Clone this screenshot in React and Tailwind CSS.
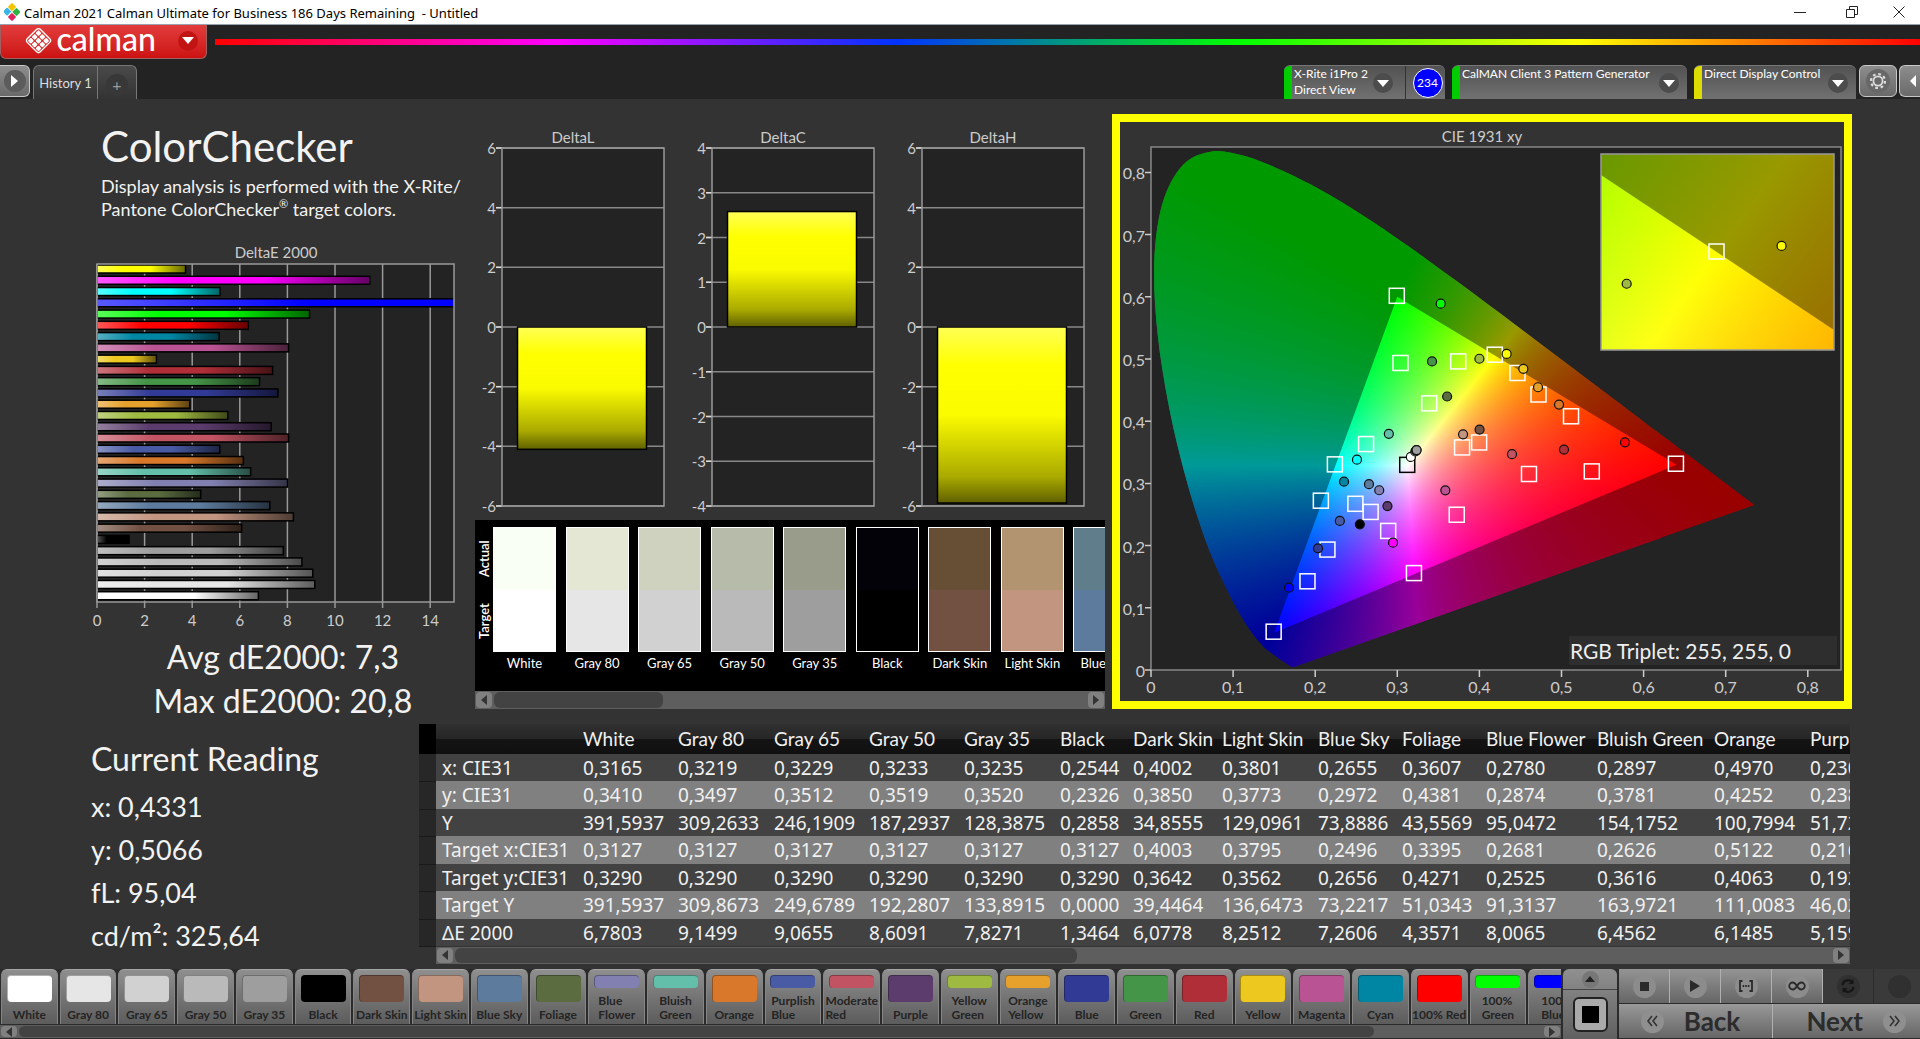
import React, { useLayoutEffect, useRef } from "react";

const PATCHES = [
  { name: "White", color: "#ffffff", dE: 6.7803 },
  { name: "Gray 80", color: "#e6e6e6", dE: 9.1499 },
  { name: "Gray 65", color: "#d1d1d1", dE: 9.0655 },
  { name: "Gray 50", color: "#bababa", dE: 8.6091 },
  { name: "Gray 35", color: "#9e9e9e", dE: 7.8271 },
  { name: "Black", color: "#000000", dE: 1.3464 },
  { name: "Dark Skin", color: "#735142", dE: 6.0778 },
  { name: "Light Skin", color: "#c29580", dE: 8.2512 },
  { name: "Blue Sky", color: "#5d7b9d", dE: 7.2606 },
  { name: "Foliage", color: "#5a6c40", dE: 4.3571 },
  { name: "Blue Flower", color: "#8280b0", dE: 8.0065, split: true },
  { name: "Bluish Green", color: "#63bfaa", dE: 6.4562, split: true },
  { name: "Orange", color: "#d9782a", dE: 6.1485 },
  { name: "Purplish Blue", color: "#4a5ba5", dE: 5.1596, split: true },
  { name: "Moderate Red", color: "#c25362", dE: 8.05, split: true },
  { name: "Purple", color: "#5c3c6c", dE: 7.32 },
  { name: "Yellow Green", color: "#9fba40", dE: 5.5, split: true },
  { name: "Orange Yellow", color: "#e6a12c", dE: 3.9, split: true },
  { name: "Blue", color: "#313a95", dE: 7.6 },
  { name: "Green", color: "#459548", dE: 6.83 },
  { name: "Red", color: "#b02e38", dE: 7.38 },
  { name: "Yellow", color: "#edc81f", dE: 2.5 },
  { name: "Magenta", color: "#ba5393", dE: 8.05 },
  { name: "Cyan", color: "#0086a3", dE: 5.13 },
  { name: "100% Red", color: "#ff0000", dE: 6.36 },
  { name: "100% Green", color: "#00ff00", dE: 8.93, split: true },
  { name: "100% Blue", color: "#0000ff", dE: 20.8, split: true },
  { name: "100% Cyan", color: "#00ffff", dE: 5.17 },
  { name: "100% Magenta", color: "#ff00ff", dE: 11.46 },
  { name: "100% Yellow", color: "#ffff00", dE: 3.72 },
];

const SWATCHES = [
  { name: "White", actual: "bg-[#f9fff5]", target: "bg-white" },
  { name: "Gray 80", actual: "bg-[#e3e7d4]", target: "bg-[#e6e6e6]" },
  { name: "Gray 65", actual: "bg-[#cfd2bf]", target: "bg-[#d1d1d1]" },
  { name: "Gray 50", actual: "bg-[#b6bbaa]", target: "bg-[#bababa]" },
  { name: "Gray 35", actual: "bg-[#999b8b]", target: "bg-[#9e9e9e]" },
  { name: "Black", actual: "bg-[#020208]", target: "bg-black" },
  { name: "Dark Skin", actual: "bg-[#674f36]", target: "bg-[#735142]" },
  { name: "Light Skin", actual: "bg-[#b39471]", target: "bg-[#c29580]" },
  { name: "Blue Sky", actual: "bg-[#607d8c]", target: "bg-[#5d7b9d]" },
];

const TARGETS = [
  [0.4003, 0.3642], [0.3795, 0.3562], [0.2496, 0.2656], [0.3395, 0.4271],
  [0.2681, 0.2525], [0.2626, 0.3616], [0.5122, 0.4063], [0.2155, 0.192],
  [0.461, 0.3135], [0.2895, 0.222], [0.3748, 0.4945], [0.4726, 0.4413],
  [0.1912, 0.141], [0.3045, 0.492], [0.5375, 0.3177], [0.447, 0.4759],
  [0.373, 0.248], [0.2075, 0.2706], [0.64, 0.33], [0.3, 0.6],
  [0.15, 0.06], [0.2246, 0.329], [0.3209, 0.1542], [0.4193, 0.5053],
];

const MEASURED = [
  [0.3165, 0.341, "#ffffff"], [0.3219, 0.3497, "#e6e6e6"], [0.3229, 0.3512, "#d1d1d1"],
  [0.3233, 0.3519, "#bababa"], [0.3235, 0.352, "#9e9e9e"], [0.2544, 0.2326, "#000000"],
  [0.4002, 0.385, "#735142"], [0.3801, 0.3773, "#c29580"], [0.2655, 0.2972, "#5d7b9d"],
  [0.3607, 0.4381, "#5a6c40"], [0.278, 0.2874, "#8280b0"], [0.2897, 0.3781, "#63bfaa"],
  [0.497, 0.4252, "#d9782a"], [0.23, 0.238, "#4a5ba5"], [0.4397, 0.3453, "#c25362"],
  [0.288, 0.262, "#5c3c6c"], [0.4, 0.4988, "#9fba40"], [0.4714, 0.453, "#e6a12c"],
  [0.2034, 0.194, "#313a95"], [0.3423, 0.4945, "#459548"], [0.503, 0.3527, "#b02e38"],
  [0.4535, 0.4826, "#edc81f"], [0.3585, 0.2873, "#ba5393"], [0.2351, 0.3011, "#0086a3"],
  [0.5773, 0.3645, "#ff0000"], [0.3529, 0.5873, "#00ff00"], [0.1681, 0.1307, "#0000ff"],
  [0.2509, 0.3365, "#00ffff"], [0.2948, 0.2031, "#ff00ff"], [0.4331, 0.5066, "#ffff00"],
];

const LOCUS = [
  [0.1741, 0.005], [0.1714, 0.0051], [0.1689, 0.0069], [0.1644, 0.0109], [0.1566, 0.0177],
  [0.144, 0.0297], [0.1355, 0.0399], [0.1241, 0.0578], [0.1096, 0.0868], [0.0913, 0.1327],
  [0.0687, 0.2007], [0.0454, 0.295], [0.0235, 0.4127], [0.0082, 0.5384], [0.0039, 0.6548],
  [0.0139, 0.7502], [0.0389, 0.812], [0.0743, 0.8338], [0.1142, 0.8262], [0.1547, 0.8059],
  [0.1929, 0.7816], [0.2296, 0.7543], [0.2658, 0.7243], [0.3016, 0.6923], [0.3373, 0.6589],
  [0.3731, 0.6245], [0.4087, 0.5896], [0.4441, 0.5547], [0.4788, 0.5202], [0.5125, 0.4866],
  [0.5448, 0.4544], [0.5752, 0.4242], [0.6029, 0.3965], [0.627, 0.3725], [0.6658, 0.334],
  [0.6915, 0.3083], [0.7079, 0.292], [0.726, 0.274], [0.7347, 0.2653],
];

const TABLE_COLS = [
  { name: "White", width: "w-[95px]", values: ["0,3165", "0,3410", "391,5937", "0,3127", "0,3290", "391,5937", "6,7803"] },
  { name: "Gray 80", width: "w-[96px]", values: ["0,3219", "0,3497", "309,2633", "0,3127", "0,3290", "309,8673", "9,1499"] },
  { name: "Gray 65", width: "w-[95px]", values: ["0,3229", "0,3512", "246,1909", "0,3127", "0,3290", "249,6789", "9,0655"] },
  { name: "Gray 50", width: "w-[95px]", values: ["0,3233", "0,3519", "187,2937", "0,3127", "0,3290", "192,2807", "8,6091"] },
  { name: "Gray 35", width: "w-[96px]", values: ["0,3235", "0,3520", "128,3875", "0,3127", "0,3290", "133,8915", "7,8271"] },
  { name: "Black", width: "w-[73px]", values: ["0,2544", "0,2326", "0,2858", "0,3127", "0,3290", "0,0000", "1,3464"] },
  { name: "Dark Skin", width: "w-[89px]", values: ["0,4002", "0,3850", "34,8555", "0,4003", "0,3642", "39,4464", "6,0778"] },
  { name: "Light Skin", width: "w-[96px]", values: ["0,3801", "0,3773", "129,0961", "0,3795", "0,3562", "136,6473", "8,2512"] },
  { name: "Blue Sky", width: "w-[84px]", values: ["0,2655", "0,2972", "73,8886", "0,2496", "0,2656", "73,2217", "7,2606"] },
  { name: "Foliage", width: "w-[84px]", values: ["0,3607", "0,4381", "43,5569", "0,3395", "0,4271", "51,0343", "4,3571"] },
  { name: "Blue Flower", width: "w-[111px]", values: ["0,2780", "0,2874", "95,0472", "0,2681", "0,2525", "91,3137", "8,0065"] },
  { name: "Bluish Green", width: "w-[117px]", values: ["0,2897", "0,3781", "154,1752", "0,2626", "0,3616", "163,9721", "6,4562"] },
  { name: "Orange", width: "w-[96px]", values: ["0,4970", "0,4252", "100,7994", "0,5122", "0,4063", "111,0083", "6,1485"] },
  { name: "Purplish Blue", width: "w-[130px]", values: ["0,2300", "0,2380", "51,7233", "0,2160", "0,1920", "46,0233", "5,1596"] },
];

const ROW_LABELS = ["x: CIE31", "y: CIE31", "Y", "Target x:CIE31", "Target y:CIE31", "Target Y", "ΔE 2000"];

/* ---------- title bar and header ---------- */

function TitleBar() {
  return (
    <div className="flex h-[25px] items-center justify-between border-b border-gray-400 bg-white pl-1 text-black">
      <div className="flex items-center gap-1">
        <svg width="16" height="18" viewBox="0 0 16 18">
          <rect x="5" y="1" width="6" height="6" rx="1" fill="#f5c400" transform="rotate(45 8 4)" />
          <rect x="0" y="6" width="6" height="6" rx="1" fill="#39b5e6" transform="rotate(45 3.5 9)" />
          <rect x="9.5" y="6" width="6" height="6" rx="1" fill="#2fb344" transform="rotate(45 12.5 9)" />
          <rect x="5" y="11" width="6" height="6" rx="1" fill="#e0245e" transform="rotate(45 8 14)" />
        </svg>
        <span className="whitespace-pre pt-0.5 font-['Noto_Sans',sans-serif] text-[13px] leading-5">
          Calman 2021 Calman Ultimate for Business 186 Days Remaining  - Untitled
        </span>
      </div>
      <div className="flex h-full">
        <button aria-label="Minimize" className="flex w-[52px] items-center justify-center">
          <svg width="12" height="12" viewBox="0 0 12 12" stroke="#222"><path d="M0 6.5h12" /></svg>
        </button>
        <button aria-label="Restore" className="flex w-[52px] items-center justify-center">
          <svg width="12" height="12" viewBox="0 0 12 12" fill="none" stroke="#222">
            <path d="M.5 3.5h8v8h-8zM3.5 3.5v-3h8v8h-3" />
          </svg>
        </button>
        <button aria-label="Close" className="flex w-[42px] items-center justify-center">
          <svg width="12" height="12" viewBox="0 0 12 12" stroke="#222"><path d="M.5.5l11 11M11.5.5l-11 11" /></svg>
        </button>
      </div>
    </div>
  );
}

function CalmanMark() {
  const cells = [];
  for (let i = 0; i < 3; i++) {
    for (let j = 0; j < 3; j++) {
      cells.push(<rect key={`${i}${j}`} x={i * 5.4 + 1.7} y={j * 5.4 + 1.7} width="4.4" height="4.4" rx="1" />);
    }
  }
  return (
    <svg width="27" height="27" viewBox="0 0 27 27">
      <g transform="translate(13.5 0.6) rotate(45)" fill="#fff">
        <rect x="0" y="0" width="18.4" height="18.4" rx="2.5" fill="none" stroke="#fff" strokeWidth="1.4" />
        {cells}
      </g>
    </svg>
  );
}

function ChevronDot({ className = "bg-[#4c4c4c]" }) {
  return (
    <span className={`flex size-5 shrink-0 items-center justify-center rounded-full ${className}`}>
      <svg width="12" height="7" viewBox="0 0 12 7" fill="#fff"><path d="M0 0h12L6 7z" /></svg>
    </span>
  );
}

function DeviceTab({ lines, bar, className, children }) {
  return (
    <div className={`flex overflow-hidden rounded-t-md border-t border-[#777] bg-gradient-to-b from-[#525252] to-[#717171] ${className}`}>
      <span className={`w-2 shrink-0 ${bar}`} />
      <button className="flex min-w-0 flex-1 justify-between pr-2 pl-0.5 text-left">
        <span className="whitespace-nowrap text-xs leading-4 text-white">
          {lines.map((l) => (
            <span key={l} className="block">{l}</span>
          ))}
        </span>
        <span className="mt-[7px]"><ChevronDot /></span>
      </button>
      {children}
    </div>
  );
}

function Header() {
  return (
    <header className="bg-[#232323]">
      <div className="flex h-10 items-start">
        <button className="flex h-[34px] w-[207px] items-center justify-between rounded-b-md border border-t-0 border-[#a06060] bg-gradient-to-b from-[#e23b3b] to-[#cc1111] pr-2 pb-0.5 pl-6">
          <CalmanMark />
          <span className="mb-1 w-[105px] text-left text-[32px] leading-7 font-medium text-white">calman</span>
          <ChevronDot className="ml-3 bg-[#c31414]" />
        </button>
        <div className="mt-3.5 ml-2 h-1.5 flex-1 bg-[linear-gradient(to_right,#f00_0%,#f0f_20%,#03f_40%,#0f0_60%,#ff0_80%,#f00_100%)]" />
      </div>

      <div className="flex h-[34px] items-start">
        <button
          aria-label="Expand panel"
          className="mr-[3px] flex h-8 w-[30px] items-center justify-center rounded-r-md border border-l-0 border-[#c8c8c8] bg-gradient-to-b from-[#8d8d8d] to-[#6a6a6a]"
        >
          <span className="flex size-[22px] items-center justify-center rounded-full bg-[#5c5c5c]">
            <svg width="7" height="12" viewBox="0 0 7 12" fill="#fff"><path d="M0 0l7 6-7 6z" /></svg>
          </span>
        </button>
        <div className="flex h-full w-[104px] rounded-t-md border border-b-0 border-[#777] bg-gradient-to-b from-[#4a4a4a] to-[#333]">
          <button className="flex-1 border-r border-[#777] pt-0.5 text-[13px] text-[#ddd]">History 1</button>
          <button aria-label="Add tab" className="flex w-[38px] items-center justify-center pt-1">
            <span className="flex size-[22px] items-center justify-center rounded-full bg-[#383838] text-base text-[#999]">+</span>
          </button>
        </div>

        <div className="ml-auto flex h-full">
          <DeviceTab lines={["X-Rite i1Pro 2", "Direct View"]} bar="bg-[#0c0]" className="mr-[7px] w-[161px]">
            <button className="ml-1 flex w-10 items-center justify-center border-l border-[#333] pl-1">
              <span className="flex size-[30px] shrink-0 items-center justify-center rounded-full border border-white bg-[#00f] text-xs text-white">
                234
              </span>
            </button>
          </DeviceTab>
          <DeviceTab lines={["CalMAN Client 3 Pattern Generator"]} bar="bg-[#0c0]" className="mr-[7px] w-[235px]" />
          <DeviceTab lines={["Direct Display Control"]} bar="bg-[#dcdc00]" className="mr-[3px] w-[162px]" />
          <button
            aria-label="Settings"
            className="mr-0.5 flex h-8 w-[38px] items-center justify-center rounded-md border border-[#c8c8c8] bg-gradient-to-b from-[#8d8d8d] to-[#6a6a6a]"
          >
            <span className="flex size-[24px] items-center justify-center rounded-full bg-[#686868]">
              <svg width="18" height="18" viewBox="0 0 18 18" fill="none" stroke="#ddd">
                <circle cx="9" cy="9" r="4.6" strokeWidth="1.8" />
                <circle cx="9" cy="9" r="7" strokeWidth="2.2" strokeDasharray="2.75 2.75" />
              </svg>
            </span>
          </button>
          <button
            aria-label="Collapse panel"
            className="flex h-8 w-[21px] items-center justify-end rounded-l-md border border-r-0 border-[#c8c8c8] bg-gradient-to-b from-[#8d8d8d] to-[#6a6a6a] pr-1"
          >
            <svg width="6" height="12" viewBox="0 0 6 12" fill="#fff"><path d="M6 0L0 6l6 6z" /></svg>
          </button>
        </div>
      </div>
    </header>
  );
}

/* ---------- charts ---------- */

function DeltaEChart() {
  const left = 97;
  const top = 43;
  const width = 357;
  const height = 338;
  const unit = width / 15;
  const step = height / PATCHES.length;
  const rows = [...PATCHES].reverse();
  return (
    <svg viewBox="0 0 475 414" className="block w-full" fill="#ccc" fontSize="15" textAnchor="middle">
      <defs>
        <linearGradient id="barShade">
          <stop offset="0" stopColor="#fff" stopOpacity="0.35" />
          <stop offset="0.3" stopColor="#fff" stopOpacity="0" />
          <stop offset="0.6" stopColor="#000" stopOpacity="0" />
          <stop offset="1" stopColor="#000" stopOpacity="0.6" />
        </linearGradient>
        <clipPath id="deClip"><rect x={left} y={top} width={width} height={height} /></clipPath>
      </defs>
      <text x="276" y="37">DeltaE 2000</text>
      <rect x={left} y={top} width={width} height={height} fill="#232323" />
      {[0, 2, 4, 6, 8, 10, 12, 14].map((v) => (
        <g key={v}>
          <path d={`M${left + v * unit} ${top}v${height + 6}`} stroke="#999" strokeWidth="1.5" />
          <text x={left + v * unit} y="405">{v}</text>
        </g>
      ))}
      <g clipPath="url(#deClip)">
        {rows.map((p, i) => (
          <g key={p.name}>
            <rect x={left} y={top + i * step + 1} width={p.dE * unit} height="8" fill={p.color} />
            <rect
              x={left}
              y={top + i * step + 1}
              width={p.dE > 15 ? 2 * width : p.dE * unit}
              height="8"
              fill="url(#barShade)"
              stroke="#000"
              strokeWidth="1.5"
            />
          </g>
        ))}
      </g>
      <rect x={left} y={top} width={width} height={height} fill="none" stroke="#999" strokeWidth="1.5" />
    </svg>
  );
}

function DeltaChart({ title, max, step, value }) {
  const top = 24;
  const height = 358;
  const y = (v) => top + ((max - v) / (2 * max)) * height;
  const ticks = [];
  for (let v = max; v >= -max; v -= step) ticks.push(v);
  return (
    <svg viewBox="0 0 210 392" className="block min-w-0 flex-1" fill="#ccc" fontSize="15">
      <defs>
        <linearGradient id={title} x2="0" y2="1">
          <stop offset="0" stopColor="#ffff55" />
          <stop offset="0.22" stopColor="#ffff00" />
          <stop offset="0.5" stopColor="#fbfb00" />
          <stop offset="0.85" stopColor="#aaaa00" />
          <stop offset="1" stopColor="#606000" />
        </linearGradient>
      </defs>
      <text x="98" y="19" textAnchor="middle">{title}</text>
      <rect x="27" y={top} width="162" height={height} fill="#232323" />
      {ticks.map((v) => (
        <g key={v}>
          <path d={`M21 ${y(v)}H189`} stroke="#888" strokeWidth="1.5" />
          <path d={`M21 ${y(v)}h6`} stroke="#ddd" strokeWidth="1.5" />
          <text x="21" y={y(v) + 6} textAnchor="end">{v}</text>
        </g>
      ))}
      <rect x="27" y={top} width="162" height={height} fill="none" stroke="#999" strokeWidth="1.5" />
      <rect
        x="42.5"
        y={Math.min(y(0), y(value))}
        width="129"
        height={Math.abs(y(0) - y(value))}
        fill={`url(#${title})`}
        stroke="#000"
        strokeWidth="1.5"
      />
    </svg>
  );
}

// Paints every pixel of the range with its normalised Rec.709 colour
function Chromaticity({ x0, x1, y0, y1, width, height }) {
  const ref = useRef(null);

  useLayoutEffect(() => {
    const ctx = ref.current.getContext("2d");
    const img = ctx.createImageData(width, height);
    for (let j = 0; j < height; j++) {
      for (let i = 0; i < width; i++) {
        const x = x0 + ((i + 0.5) / width) * (x1 - x0);
        const y = Math.max(y1 - ((j + 0.5) / height) * (y1 - y0), 0.001);
        const z = 1 - x - y;
        const r = Math.max(3.2406 * x - 1.5372 * y - 0.4986 * z, 0);
        const g = Math.max(-0.9689 * x + 1.8758 * y + 0.0415 * z, 0);
        const b = Math.max(0.0557 * x - 0.204 * y + 1.057 * z, 0);
        const m = Math.max(r, g, b);
        const k = (j * width + i) * 4;
        img.data[k] = (r / m) * 255;
        img.data[k + 1] = (g / m) * 255;
        img.data[k + 2] = (b / m) * 255;
        img.data[k + 3] = 255;
      }
    }
    ctx.putImageData(img, 0, 0);
  }, [x0, x1, y0, y1, width, height]);

  return <canvas ref={ref} width={width} height={height} className="block" />;
}

function CieChart() {
  const px = (x) => 31 + x * 821;
  const py = (y) => 548 - y * 622;
  const zx = (x) => 597 + (x - 0.4193) * 4680;
  const zy = (y) => 130 - (y - 0.5053) * 3920;
  const pts = LOCUS.map(([x, y]) => [px(x), py(y)]);
  let locus = `M${pts[0]}`;
  for (let i = 0; i < pts.length - 1; i++) {
    const a = pts[Math.max(i - 1, 0)];
    const b = pts[i];
    const c = pts[i + 1];
    const d = pts[Math.min(i + 2, pts.length - 1)];
    locus += `C${b[0] + (c[0] - a[0]) / 6} ${b[1] + (c[1] - a[1]) / 6} ${c[0] - (d[0] - b[0]) / 6} ${c[1] - (d[1] - b[1]) / 6} ${c}`;
  }
  locus += "Z";
  const gamut = `M${px(0.64)} ${py(0.33)}L${px(0.3)} ${py(0.6)}L${px(0.15)} ${py(0.06)}Z`;

  return (
    <svg viewBox="0 0 724 579" className="block w-full" fill="#ccc" fontSize="16">
      <defs>
        <clipPath id="locus"><path d={locus} /></clipPath>
        <clipPath id="zoomClip"><rect x="481" y="32" width="233" height="196" /></clipPath>
      </defs>
      <text x="362" y="20" textAnchor="middle" fontSize="15">CIE 1931 xy</text>
      <rect x="31" y="25" width="690" height="523" fill="#232323" stroke="#888" strokeWidth="1.5" />
      {[0, 1, 2, 3, 4, 5, 6, 7, 8].map((n) => (
        <g key={n} stroke="none">
          <path d={`M${px(n / 10)} 548v7M25 ${py(n / 10)}h6`} stroke="#ccc" strokeWidth="1.5" />
          <text x={px(n / 10)} y="571" textAnchor="middle">{n ? `0,${n}` : "0"}</text>
          <text x="25" y={py(n / 10) + 7} textAnchor="end">{n ? `0,${n}` : "0"}</text>
        </g>
      ))}

      <foreignObject x="31" y="25" width="656" height="523" clipPath="url(#locus)">
        <Chromaticity x0={0} x1={0.799} y0={0} y1={0.8408} width={656} height={523} />
      </foreignObject>
      <path d={locus + gamut} fill="#000" fillOpacity="0.4" fillRule="evenodd" />

      <g fill="none" stroke="#fff" strokeWidth="1.5">
        {TARGETS.map(([x, y]) => (
          <rect key={`${x}-${y}`} x={px(x) - 8} y={py(y) - 8.5} width="15" height="15" />
        ))}
        <rect x={px(0.3127) - 8} y={py(0.329) - 8} width="15" height="15" stroke="#000" />
      </g>
      <g stroke="#111" strokeWidth="1.2">
        {MEASURED.map(([x, y, c]) => (
          <circle key={`${x}-${y}`} cx={px(x)} cy={py(y) - 1} r="4.5" fill={c} />
        ))}
      </g>

      {/* magnified view around the selected patch */}
      <g clipPath="url(#zoomClip)">
        <foreignObject x="480" y="32" width="234" height="196">
          <Chromaticity x0={0.3943} x1={0.4443} y0={0.4803} y1={0.5303} width={234} height={196} />
        </foreignObject>
        <path
          d={`M480 32H714V${zy(0.33 + (0.64 - 0.4443) * 0.794)}L480 ${zy(0.33 + (0.64 - 0.3943) * 0.794)}Z`}
          fill="#000"
          fillOpacity="0.4"
        />
      </g>
      <rect x="481" y="32" width="233" height="196" fill="none" stroke="#999" strokeWidth="1.5" />
      <rect x={zx(0.4193) - 8} y={zy(0.5053) - 8} width="15" height="15" fill="none" stroke="#fff" strokeWidth="1.5" />
      <circle cx={zx(0.4331)} cy={zy(0.5066) - 1} r="4.5" fill="#ff0" stroke="#111" strokeWidth="1.2" />
      <circle cx={zx(0.4)} cy={zy(0.4972)} r="4.5" fill="#9fba40" stroke="#111" strokeWidth="1.2" />

      <rect x="449" y="514" width="268" height="29" fill="#2e2e2e" />
      <text x="450" y="537" fill="#eee" fontSize="21">RGB Triplet: 255, 255, 0</text>
    </svg>
  );
}

/* ---------- shared scroll bar ---------- */

function ScrollBar({ size, thumb }) {
  return (
    <div className={`flex items-center bg-[#5e5e5e] p-px ${size}`}>
      <button aria-label="Scroll left" className="flex h-full w-4 items-center justify-center rounded-sm bg-[#808080]">
        <svg width="6" height="10" viewBox="0 0 6 10" fill="#333"><path d="M6 0v10L0 5z" /></svg>
      </button>
      <div className="mx-0.5 h-full flex-1">
        <div className={`h-full rounded-md bg-[#434343] ${thumb}`} />
      </div>
      <button aria-label="Scroll right" className="flex h-full w-4 items-center justify-center rounded-sm bg-[#808080]">
        <svg width="6" height="10" viewBox="0 0 6 10" fill="#333"><path d="M0 0v10l6-5z" /></svg>
      </button>
    </div>
  );
}

function SwatchPanel() {
  return (
    <div className="mt-1">
      <div className="flex h-[171px] overflow-hidden bg-black pt-[7px]">
        <div className="flex h-[125px] w-[18px] shrink-0 rotate-180 justify-around text-[13px] leading-[18px] font-semibold text-white [writing-mode:vertical-rl]">
          <span>Target</span>
          <span>Actual</span>
        </div>
        <div className="grid w-[653px] shrink-0 grid-cols-9">
          {SWATCHES.map((s) => (
            <div key={s.name} className="w-[63px]">
              <div className="flex h-[125px] flex-col border border-white">
                <div className={`flex-1 ${s.actual}`} />
                <div className={`flex-1 ${s.target}`} />
              </div>
              <div className="text-center text-[13px] leading-[22px] whitespace-nowrap text-white">{s.name}</div>
            </div>
          ))}
        </div>
      </div>
      <ScrollBar size="h-[18px]" thumb="w-[169px]" />
    </div>
  );
}

function DataTable() {
  return (
    <div className="mt-px mr-[70px] min-w-0 flex-1 overflow-hidden">
      <table className="w-[1517px] table-fixed border-collapse text-left whitespace-nowrap text-[#f0f0f0]">
        <thead>
          <tr className="h-[30px] bg-[linear-gradient(#303030_0%,#262626_50%,#141414_50%,#101010_100%)]">
            <th className="w-[17px] bg-black" />
            <th className="w-[143px]" />
            {TABLE_COLS.map((c) => (
              <th key={c.name} className={`p-0 pl-1 text-[19px] leading-6 font-normal ${c.width}`}>{c.name}</th>
            ))}
          </tr>
        </thead>
        <tbody className="font-['Noto_Sans',sans-serif] text-[19px] leading-6">
          {ROW_LABELS.map((label, i) => (
            <tr key={label} className="odd:h-[27px] odd:bg-[#424242] even:h-[28px] even:bg-[#808080]">
              <td className="border-b border-[#1a1a1a] bg-[#272727] p-0" />
              <th className="p-0 pl-1.5 font-normal">{label}</th>
              {TABLE_COLS.map((c) => (
                <td key={c.name} className="p-0 pl-1">{c.values[i]}</td>
              ))}
            </tr>
          ))}
        </tbody>
      </table>
      <div className="ml-[17px]">
        <ScrollBar size="h-[17px]" thumb="w-[622px]" />
      </div>
    </div>
  );
}

/* ---------- bottom bar ---------- */

function PatchButton({ patch }) {
  return (
    <button className="mx-px flex h-[55px] flex-col items-center justify-between rounded-t-md border-x border-t border-[#a5a5a5] border-x-[#858585] bg-gradient-to-b from-[#8f8f8f] to-[#5c5c5c] pt-[5px] pb-0.5 text-xs font-bold whitespace-nowrap text-[#242424]">
      <span
        className={`w-[45px] shrink-0 rounded border-t border-l border-black/30 ${patch.split ? "h-[13px]" : "h-[27px]"}`}
        style={{ backgroundColor: patch.color }}
      />
      <span className="text-left leading-[14px]">
        {patch.split ? (
          <>
            {patch.name.split(" ")[0]}
            <br />
            {patch.name.split(" ")[1]}
          </>
        ) : (
          patch.name
        )}
      </span>
    </button>
  );
}

function TransportButton({ label, dark, children }) {
  return (
    <button
      aria-label={label}
      className={`flex h-[34px] w-[51px] shrink-0 items-center justify-center border-r ${
        dark ? "border-[#2a2a2a] bg-[#3a3a3a]" : "border-[#b0b0b0] bg-gradient-to-b from-[#949494] to-[#666]"
      }`}
    >
      <span className={`flex size-[23px] items-center justify-center rounded-full ${dark ? "bg-[#303030]" : "bg-[#8c8c8c]"}`}>
        {children}
      </span>
    </button>
  );
}

function BottomBar() {
  return (
    <footer className="mt-auto flex h-[70px] bg-[#2b2b2b]">
      <div className="min-w-0 flex-1 overflow-hidden">
        <div className="grid w-[1586px] grid-cols-27">
          {PATCHES.slice(0, 27).map((p) => (
            <PatchButton key={p.name} patch={p} />
          ))}
        </div>
        <ScrollBar size="mt-px h-[13px]" thumb="w-[89%]" />
      </div>

      <div className="mx-0.5 flex w-[54px] flex-col rounded-t-md bg-gradient-to-b from-[#909090] to-[#606060]">
        <button aria-label="Show more" className="flex h-[21px] items-center justify-center border-b border-[#444]">
          <span className="flex size-[17px] items-center justify-center rounded-full bg-[#777]">
            <svg width="10" height="6" viewBox="0 0 10 6" fill="#222"><path d="M0 6h10L5 0z" /></svg>
          </span>
        </button>
        <button aria-label="Pattern window" className="flex flex-1 items-center justify-center">
          <span className="flex size-[35px] items-center justify-center rounded-md border-2 border-[#222] bg-[#aaa]">
            <span className="size-[17px] bg-black" />
          </span>
        </button>
      </div>

      <div className="flex w-[301px] flex-col overflow-hidden">
        <div className="flex">
          <TransportButton label="Stop">
            <span className="size-[9px] bg-[#2a2a2a]" />
          </TransportButton>
          <TransportButton label="Play">
            <svg width="10" height="12" viewBox="0 0 10 12" fill="#2a2a2a"><path d="M0 0l10 6-10 6z" /></svg>
          </TransportButton>
          <TransportButton label="Read series">
            <svg width="16" height="12" viewBox="0 0 16 12" fill="none" stroke="#2a2a2a" strokeWidth="1.8">
              <path d="M4.5 1H2v10h2.5M11.5 1H14v10h-2.5M4.6 6h1.6M7.2 6h1.6M9.8 6h1.6" />
            </svg>
          </TransportButton>
          <TransportButton label="Read continuously">
            <svg width="18" height="10" viewBox="0 0 18 10" fill="none" stroke="#2a2a2a" strokeWidth="1.8">
              <path d="M9 5C7.5 2.500 6.300 1.500 4.700 1.500a3.500 3.500 0 000 7C6.300 8.500 7.500 7.500 9 5s2.700-3.500 4.300-3.500a3.500 3.500 0 010 7C11.700 8.500 10.500 7.500 9 5z" />
            </svg>
          </TransportButton>
          <TransportButton label="Repeat" dark>
            <svg width="16" height="16" viewBox="0 0 16 16" fill="none" stroke="#161616" strokeWidth="2.2">
              <path d="M2.500 7A5.500 5.500 0 0112 4M13.500 9A5.500 5.500 0 014 12" />
              <path d="M13.500 1v5h-5zM2.500 15v-5h5z" fill="#161616" stroke="none" />
            </svg>
          </TransportButton>
          <TransportButton label="Record" dark />
        </div>
        <div className="mt-px flex h-[34px] text-[26px] font-bold text-[#2c2c2c]">
          <button className="flex w-[154px] items-center justify-center gap-5 border-r border-[#b0b0b0] bg-gradient-to-b from-[#999] to-[#666] pr-2.5">
            <span className="flex size-[23px] items-center justify-center rounded-full bg-[#8f8f8f]">
              <svg width="12" height="12" viewBox="0 0 12 12" fill="none" stroke="#333" strokeWidth="1.6"><path d="M6 1L2 6l4 5M11 1L7 6l4 5" /></svg>
            </span>
            Back
          </button>
          <button className="flex flex-1 items-center justify-end gap-5 bg-gradient-to-b from-[#999] to-[#666] pr-3.5">
            Next
            <span className="flex size-[23px] items-center justify-center rounded-full bg-[#8f8f8f]">
              <svg width="12" height="12" viewBox="0 0 12 12" fill="none" stroke="#333" strokeWidth="1.6"><path d="M1 1l4 5-4 5M6 1l4 5-4 5" /></svg>
            </span>
          </button>
        </div>
      </div>
    </footer>
  );
}

function App() {
  return (
    <div className="flex min-h-screen flex-col overflow-hidden bg-[#333] font-['Lato',sans-serif] text-[#f2f2f2]">
      <TitleBar />
      <Header />

      <main>
        <div className="flex">
          <section className="w-[475px] shrink-0 pt-[23px]">
            <h1 className="pl-[101px] text-[42px] leading-[48px]">ColorChecker</h1>
            <p className="mt-[5px] pl-[101px] text-lg leading-[23px] whitespace-nowrap">
              Display analysis is performed with the X-Rite/
              <br />
              Pantone ColorChecker<sup className="top-0 align-text-top text-[11px] leading-3">®</sup> target colors.
            </p>
            <DeltaEChart />
            <div className="pl-[91px] text-center text-[32px] leading-[44px]">
              <div>Avg dE2000: 7,3</div>
              <div>Max dE2000: 20,8</div>
            </div>
          </section>

          <section className="w-[630px] shrink-0 pt-[25px]">
            <div className="flex">
              <DeltaChart title="DeltaL" max={6} step={2} value={-4.1} />
              <DeltaChart title="DeltaC" max={4} step={1} value={2.58} />
              <DeltaChart title="DeltaH" max={6} step={2} value={-5.9} />
            </div>
            <SwatchPanel />
          </section>

          <section className="mt-[15px] mr-[68px] ml-[7px] min-w-0 flex-1 self-start border-8 border-[#ff0]">
            <CieChart />
          </section>
        </div>

        <div className="flex">
          <section className="w-[419px] shrink-0 pt-3.5 pl-[91px]">
            <h2 className="text-[32px] leading-[44px]">Current Reading</h2>
            <div className="mt-1 text-[27px] leading-[43px]">
              <div>x: 0,4331</div>
              <div>y: 0,5066</div>
              <div>fL: 95,04</div>
              <div>cd/m²: 325,64</div>
            </div>
          </section>
          <DataTable />
        </div>
      </main>

      <BottomBar />
    </div>
  );
}

export default App;
